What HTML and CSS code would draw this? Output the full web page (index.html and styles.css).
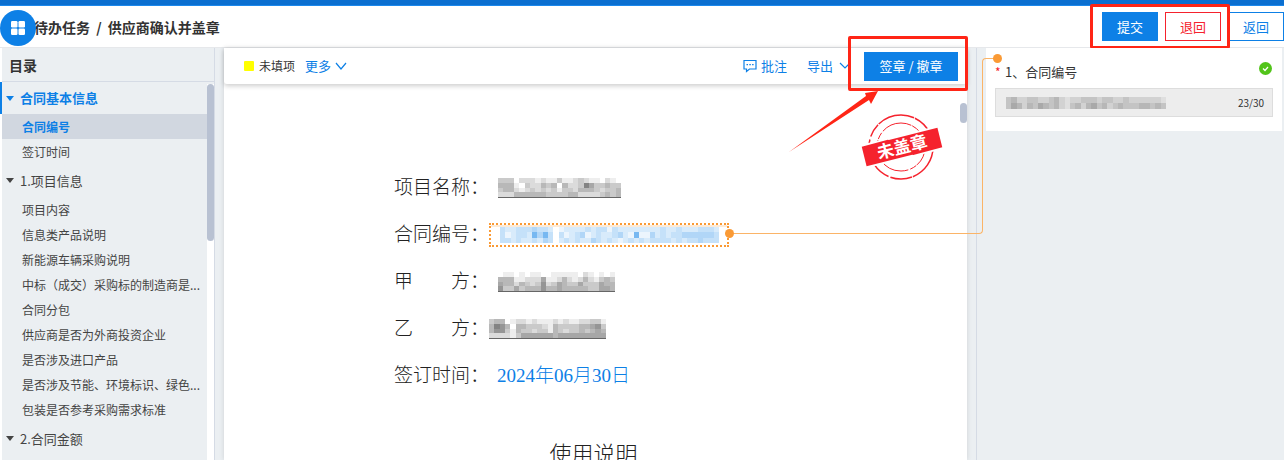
FILE: index.html
```html
<!DOCTYPE html>
<html lang="zh-CN">
<head>
    <meta charset="UTF-8">
    <meta name="viewport" content="width=device-width, initial-scale=1.0">
    <title>供应商确认并盖章</title>
    <link rel="stylesheet" href="styles.css">
</head>
<body>
    <div class="topbar"></div>
    <header class="header">
        <button class="apps" type="button" aria-label="应用">
            <svg width="14" height="14" viewBox="0 0 14 14" fill="#fff">
                <rect width="6.5" height="6.5" rx="1.2"/>
                <rect x="7.5" width="6.5" height="6.5" rx="1.2"/>
                <rect y="7.5" width="6.5" height="6.5" rx="1.2"/>
                <rect x="7.5" y="7.5" width="6.5" height="6.5" rx="1.2"/>
            </svg>
        </button>
        <h1>待办任务 <span>/</span> 供应商确认并盖章</h1>
        <div class="actions">
            <button class="btn primary" type="button">提交</button>
            <button class="btn danger" type="button">退回</button>
            <button class="btn" type="button">返回</button>
        </div>
        <div class="mark mark-header"></div>
    </header>

    <main class="main">
        <!-- 目录 -->
        <nav class="sidebar">
            <h2>目录</h2>
            <div class="tree">
                <h3 class="active"><i class="caret"></i>合同基本信息</h3>
                <ul>
                    <li class="current"><a href="#no">合同编号</a></li>
                    <li><a href="#date">签订时间</a></li>
                </ul>
                <h3><i class="caret"></i>1.项目信息</h3>
                <ul>
                    <li><a href="#">项目内容</a></li>
                    <li><a href="#">信息类产品说明</a></li>
                    <li><a href="#">新能源车辆采购说明</a></li>
                    <li><a href="#">中标（成交）采购标的制造商是...</a></li>
                    <li><a href="#">合同分包</a></li>
                    <li><a href="#">供应商是否为外商投资企业</a></li>
                    <li><a href="#">是否涉及进口产品</a></li>
                    <li><a href="#">是否涉及节能、环境标识、绿色...</a></li>
                    <li><a href="#">包装是否参考采购需求标准</a></li>
                </ul>
                <h3><i class="caret"></i>2.合同金额</h3>
                <div class="track"><div class="thumb"></div></div>
            </div>
        </nav>

        <!-- 合同正文 -->
        <section class="doc">
            <div class="toolbar">
                <i class="square"></i>
                <span class="hint">未填项</span>
                <button class="tool" type="button">更多
                    <svg width="12" height="8" viewBox="0 0 12 8"><path d="M1 1L6 7L11 1"/></svg>
                </button>
                <div class="right">
                    <button class="tool" type="button">
                        <svg width="14" height="14" viewBox="0 0 14 14"><path d="M1 1.500h12v8.500H6.500L3.500 12.500V10H1z"/><path d="M3.500 5.700h1.500M6.300 5.700h1.500M9.100 5.700h1.500"/></svg>
                        批注</button>
                    <button class="tool export" type="button">导出
                        <svg width="12" height="8" viewBox="0 0 12 8"><path d="M1 1L6 6L11 1"/></svg>
                    </button>
                    <button class="btn primary sign" type="button">签章 / 撤章</button>
                </div>
            </div>
            <div class="paper">
                <p><span>项目名称：</span><svg class="mosaic indent line" data-rows="33302221211311232110210,44410322434042237533433,34421232323133244432334,22244444433334422223434"></svg></p>
                <p id="no"><span>合同编号：</span><span class="field"><svg class="mosaic blue" data-rows="32233343320122223233132222222232232223332,31233274730312341232234217114232334444443,33232232430232322432321232323333232334333"></svg></span></p>
                <p><span>甲　　方：</span><svg class="mosaic indent line" data-rows="0110101100111110210101,4441122251124212421343,5442432362354335333544,6335344464454444433554"></svg></p>
                <p><span>乙　　方：</span><svg class="mosaic line" data-rows="3440122121112121122331,4764044333214333344563,4663143323314323343454,2222135555554555555555"></svg></p>
                <p id="date"><span>签订时间：</span><span class="date">2024年06月30日</span></p>
                <h2>使用说明</h2>
                <svg class="stamp" width="84" height="70" viewBox="0 0 84 70">
                    <g fill="none" stroke="#f5222d">
                        <circle cx="41" cy="35" r="32" stroke-width="1.5" stroke-dasharray="38 1 22 2 45 3 14 1"/>
                        <circle cx="41" cy="35" r="24" stroke-dasharray="20 1 7 2 31 1"/>
                    </g>
                    <g transform="rotate(-14 42 35)">
                        <rect x="2" y="23" width="80" height="24" fill="#fff"/>
                        <path d="M3 25L30 24.500L31 25L81 25L81 45L51 45.500L50 45L3 45z" fill="#f5222d"/>
                        <text x="42" y="41" text-anchor="middle">未盖章</text>
                    </g>
                </svg>
                <div class="thumb"></div>
            </div>
            <svg class="arrow" width="90" height="62" viewBox="0 0 90 62"><path d="M0 61L77 5L76 2L89 0L82 13L80 9Z" fill="#ff2516"/></svg>
            <div class="mark mark-sign"></div>
        </section>

        <!-- 右侧填写项 -->
        <aside class="panel">
            <div class="card">
                <label for="contract-no"><em>*</em>1、合同编号</label>
                <svg class="ok" width="13" height="13" viewBox="0 0 13 13"><circle cx="6.5" cy="6.5" r="6.5" fill="#52c41a"/><path d="M4 6.500L6 8.500L9 5" fill="none" stroke="#fff" stroke-width="1.2"/></svg>
                <div class="input">
                    <input id="contract-no" type="text" readonly>
                    <svg class="mosaic small" data-rows="342233223421223332332232222221,354243543421342453423433344343"></svg>
                    <span>23/30</span>
                </div>
            </div>
        </aside>

        <div class="link"><i></i></div>
        <div class="link-end"><i></i></div>
    </main>

<script src="script.js"></script>
</body>
</html>
```
FILE: styles.css
```css
* {
    margin: 0;
    padding: 0;
    box-sizing: border-box;
}
html,
body {
    height: 100%;
}
body {
    display: flex;
    flex-direction: column;
    overflow: hidden;
    background-color: #ebeff2;
    color: #333;
    font: 13px/20px "Noto Sans CJK SC", sans-serif;
}
button {
    font: inherit;
    cursor: pointer;
}
ul {
    list-style: none;
}
a {
    color: inherit;
    text-decoration: none;
}
.topbar {
    flex: none;
    height: 6px;
    background-color: #0b6fd0;
    border-bottom: 1px solid #1c88ec;
}
.header {
    flex: none;
    height: 42px;
    display: flex;
    align-items: center;
    padding-left: 34px;
    background-color: #fff;
    border-bottom: 1px solid #e6e8eb;
    position: relative;
    z-index: 7;
}
.header h1 {
    flex: 1;
    font-size: 14px;
    font-weight: 700;
}
.header h1 span {
    margin: 0 3px;
}
.apps {
    position: absolute;
    left: 0;
    top: 4px;
    width: 36px;
    height: 36px;
    display: flex;
    align-items: center;
    justify-content: center;
    border: 0;
    border-radius: 50%;
    background-color: #0d80e6;
}
.actions {
    display: flex;
    gap: 7px;
}
.btn {
    width: 56px;
    height: 29px;
    border: 1px solid #0d80e6;
    background-color: #fff;
    color: #0d80e6;
}
.danger {
    border-color: #f5222d;
    color: #f5222d;
}
.primary {
    background-color: #0d80e6;
    color: #fff;
}
/* 红框标注 */
.mark {
    position: absolute;
    border: 3px solid #ff2516;
    border-radius: 2px;
    pointer-events: none;
}
.mark-header {
    right: 54px;
    top: -2px;
    width: 140px;
    height: 45px;
}
.mark-sign {
    right: -1px;
    top: -12px;
    width: 120px;
    height: 55px;
}
.main {
    flex: 1;
    min-height: 0;
    display: flex;
    position: relative;
    z-index: 8;
}
.sidebar {
    width: 215px;
    display: flex;
    flex-direction: column;
    border-left: 2px solid #fff;
    border-right: 1px solid #d5dbe5;
}
.sidebar h2 {
    flex: none;
    height: 34px;
    padding-left: 7px;
    border-bottom: 1px solid #d5dbe5;
    font-size: 14px;
    line-height: 34px;
}
.tree {
    flex: 1;
    min-height: 0;
    position: relative;
    color: #444;
}
.tree h3 {
    height: 33px;
    display: flex;
    align-items: center;
    gap: 6px;
    padding-left: 4px;
    font-size: 13px;
    font-weight: 400;
}
.tree .active {
    height: 32px;
    color: #0d80e6;
    font-weight: 700;
    box-shadow: -2px 0 0 #0d80e6;
}
.caret {
    border: 4px solid transparent;
    border-top: 5px solid currentColor;
    border-bottom: 0;
}
.tree li {
    height: 25px;
    padding-left: 20px;
    font-size: 12px;
    line-height: 25px;
    white-space: nowrap;
}
.tree .current {
    background-color: #d1d7e0;
    color: #0d80e6;
    font-weight: 700;
}
.track {
    position: absolute;
    top: 2px;
    right: 0;
    bottom: 0;
    width: 7px;
    background-color: #fff;
}
.thumb {
    width: 7px;
    height: 157px;
    border-radius: 4px;
    background-color: #b8c1d2;
}
.doc {
    flex: 1;
    min-width: 0;
    display: flex;
    flex-direction: column;
    margin: 0 9px;
    position: relative;
    background-color: #fff;
    box-shadow: 0 0 5px rgba(0, 0, 0, 0.12);
}
.toolbar {
    flex: none;
    height: 36px;
    display: flex;
    align-items: center;
    padding: 0 9px 0 20px;
    border-radius: 0 0 3px 3px;
    box-shadow: 0 2px 5px rgba(0, 0, 0, 0.2);
}
.square {
    width: 10px;
    height: 10px;
    border-radius: 1px;
    background-color: #ff0;
}
.hint {
    margin: 0 10px 0 5px;
    font-size: 12px;
}
.tool {
    display: flex;
    align-items: center;
    gap: 4px;
    border: 0;
    background: none;
    color: #0d80e6;
}
.tool path {
    fill: none;
    stroke: #0d80e6;
    stroke-width: 1.2;
}
.right {
    display: flex;
    margin-left: auto;
}
.export {
    gap: 6px;
    margin: 0 13px 0 20px;
}
.sign {
    width: 94px;
}
.paper {
    flex: 1;
    min-height: 0;
    overflow: hidden;
    position: relative;
    padding: 80px 0 0 170px;
    color: #222;
    font-family: "Liberation Serif", "Noto Sans CJK SC", serif;
    font-size: 19px;
    font-weight: 300;
}
.paper p {
    height: 47px;
    display: flex;
    align-items: center;
}
.paper h2 {
    margin: 40px 174px 0 0;
    font-size: 22px;
    font-weight: 300;
    line-height: 32px;
    text-align: center;
}
.paper .thumb {
    position: absolute;
    top: 19px;
    right: 0;
    height: 20px;
}
.indent {
    margin-left: 9px;
}
.date {
    margin-left: 8px;
    color: #0d80e6;
}
.field {
    height: 24px;
    display: flex;
    align-items: center;
    padding: 0 8px 0 9px;
    border: 2px dotted #fa9a35;
    box-shadow: inset 0 2px 0 #fdebd7;
}
.mosaic {
    height: 20px;
    color: #222;
}
.line {
    border-bottom: 1px solid #666;
}
.blue {
    height: 16px;
    color: #0d80e6;
}
.stamp {
    position: absolute;
    right: 23px;
    top: 28px;
}
.stamp text {
    fill: #fff;
    font: 700 17px "Noto Sans CJK SC", sans-serif;
}
.arrow {
    position: absolute;
    right: 88px;
    top: 43px;
}
.panel {
    width: 308px;
    padding: 0 2px 0 9px;
    border-left: 1px solid #d5dbe5;
}
.card {
    height: 83px;
    padding: 14px 9px;
    position: relative;
    background-color: #fff;
}
.card label {
    display: flex;
    height: 26px;
}
.card em {
    width: 10px;
    color: #f5222d;
    font-size: 12px;
    font-style: normal;
}
.ok {
    position: absolute;
    top: 14px;
    right: 10px;
}
.input {
    height: 29px;
    display: flex;
    align-items: center;
    justify-content: space-between;
    padding: 0 8px 0 10px;
    position: relative;
    border: 1px solid #ddd;
    background-color: #ededed;
    font-size: 10px;
}
.input input {
    position: absolute;
    left: 0;
    top: 0;
    width: 100%;
    height: 100%;
    padding: 0 44px 0 10px;
    border: 0;
    background: none;
}
.small {
    height: 12px;
    color: #444;
}
/* 字段与填写项的连线 */
.link {
    position: absolute;
    left: 729px;
    right: 301px;
    top: 20px;
    height: 166px;
    border: solid #fbb467;
    border-width: 0 1px 1px 0;
    border-radius: 0 0 4px 0;
    pointer-events: none;
}
.link-end {
    position: absolute;
    right: 286px;
    top: 10px;
    width: 16px;
    height: 10px;
    border: solid #fbb467;
    border-width: 1px 0 0 1px;
    border-radius: 4px 0 0 0;
}
.link i,
.link-end i {
    position: absolute;
    width: 9px;
    height: 9px;
    border-radius: 50%;
    background-color: #fa9a35;
}
.link i {
    left: -4px;
    bottom: -5px;
}
.link-end i {
    right: -4px;
    top: -5px;
}
```
FILE: script.js
```js
// 敏感内容打码: 每个数字是一格的深浅
var list = document.getElementsByClassName("mosaic");
for(var i=0;i<list.length;i++){
    var rows = list[i].getAttribute("data-rows").split(",");
    var cols = rows[0].length;
    var html = "";
    for(var y=0;y<rows.length;y++){
        for(var x=0;x<cols;x++){
            html += '<rect x="'+x+'" y="'+y+'" width="1" height="1" fill="currentColor" fill-opacity="'+rows[y][x]*0.08+'"/>';
        }
    }
    list[i].setAttribute("viewBox","0 0 "+cols+" "+rows.length);
    list[i].setAttribute("preserveAspectRatio","none");
    list[i].setAttribute("shape-rendering","crispEdges");
    list[i].setAttribute("width",Math.round(cols*16/3));
    list[i].innerHTML = html;
}
```
